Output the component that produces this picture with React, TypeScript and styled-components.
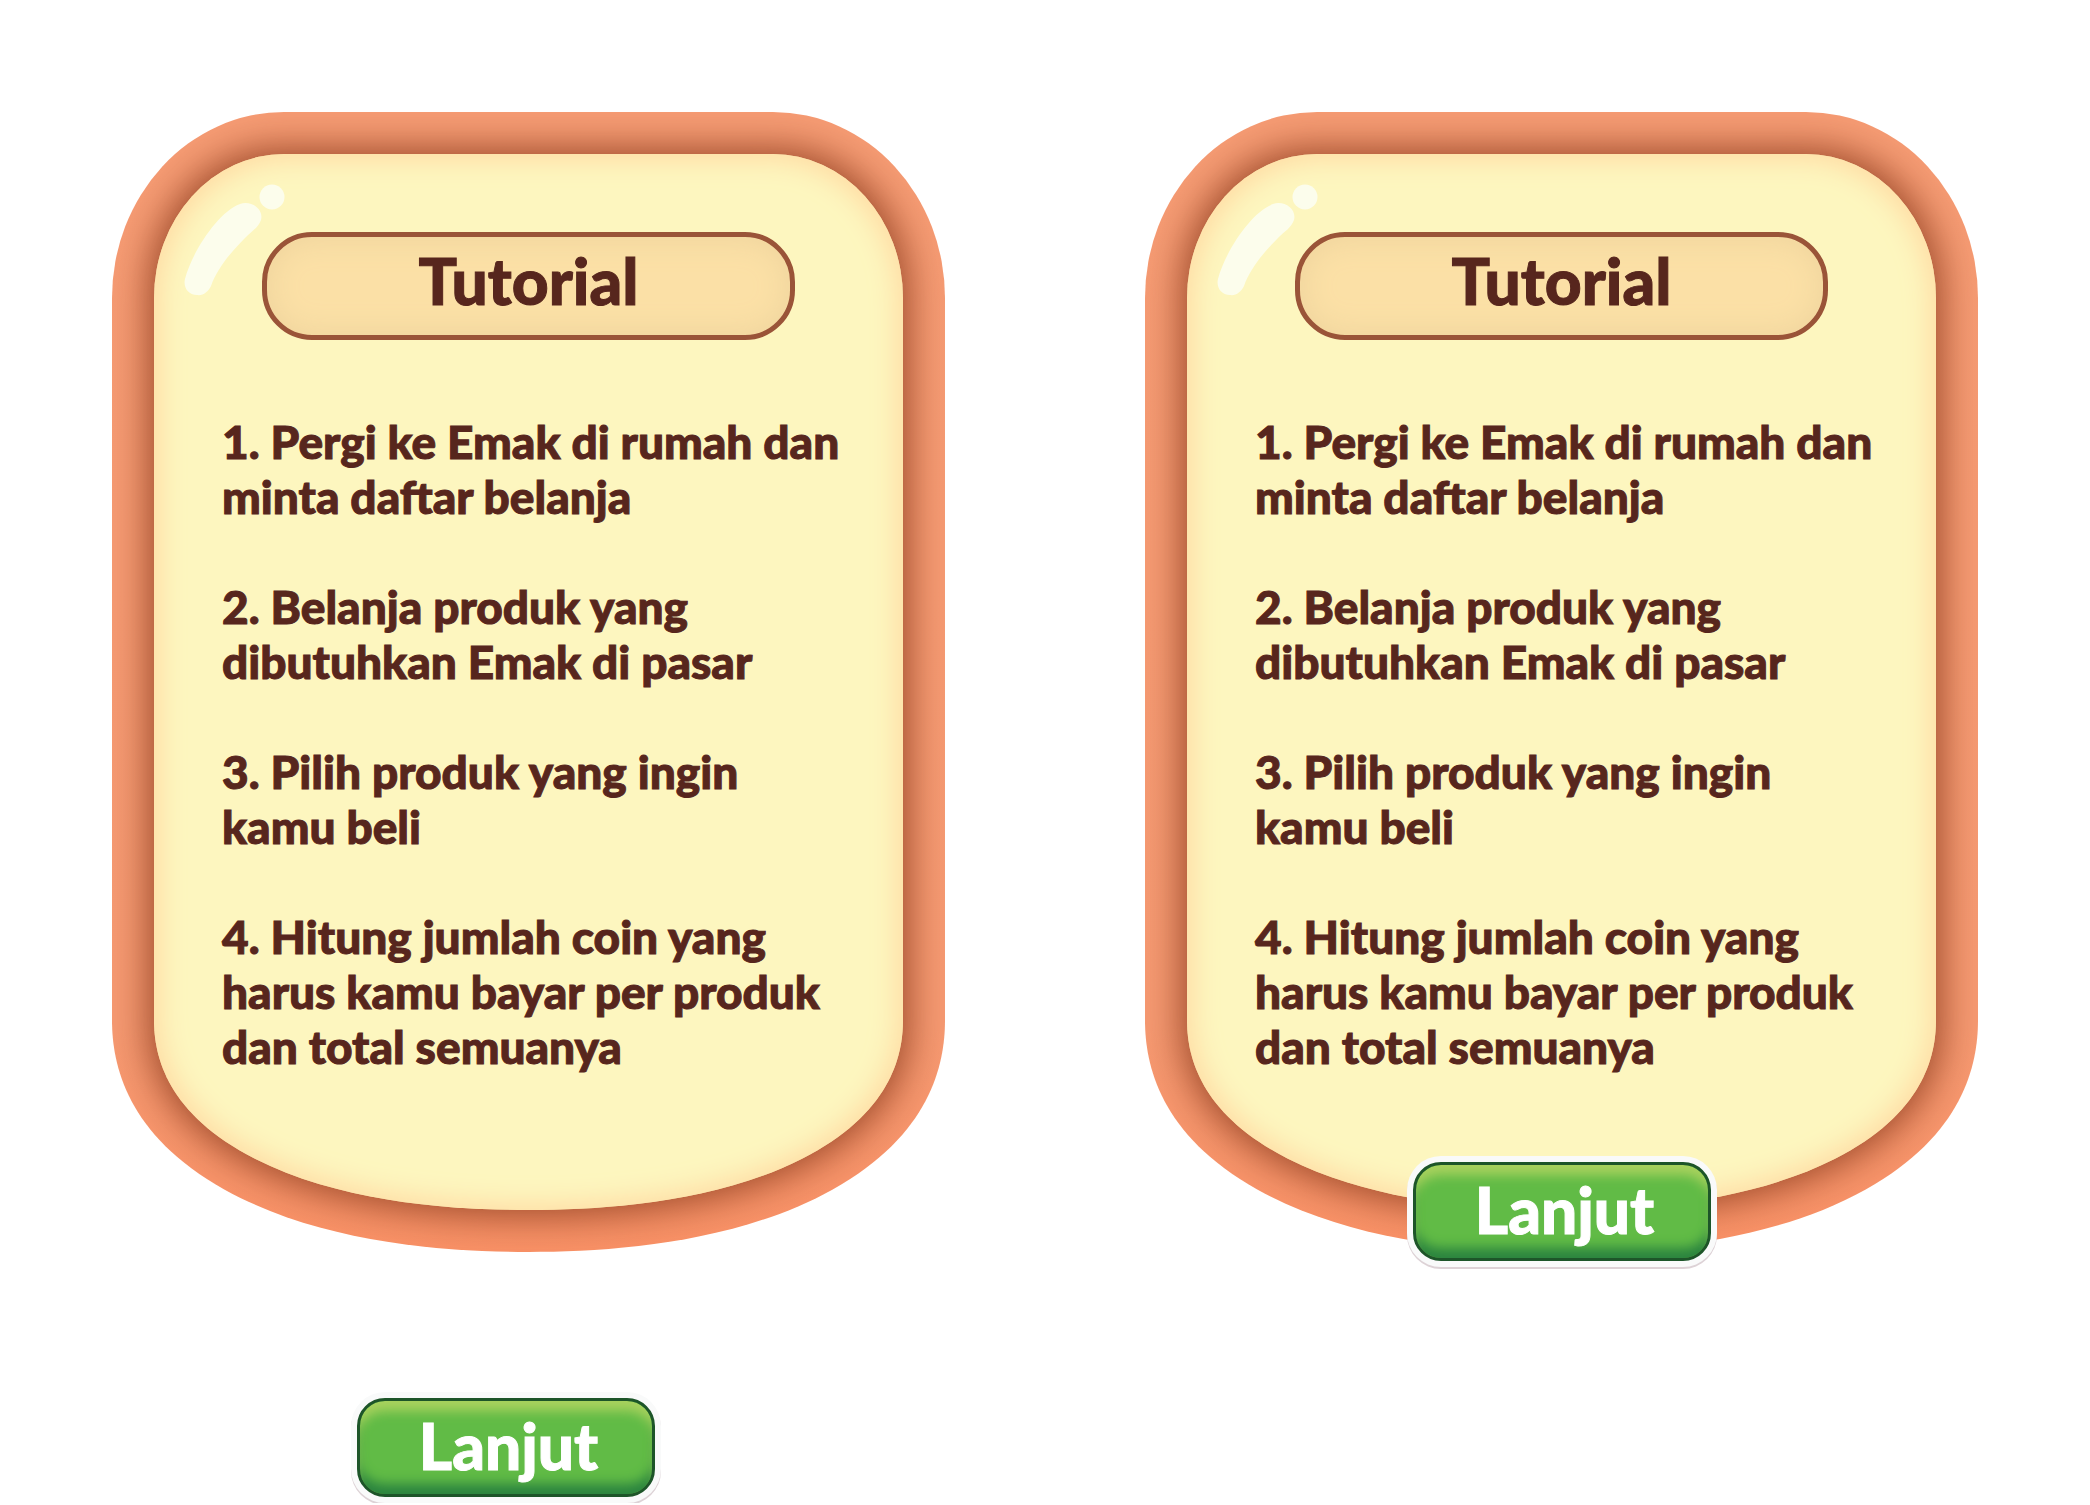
import React from "react";
import styled, { createGlobalStyle } from "styled-components";

const GlobalStyle = createGlobalStyle`
  * { box-sizing: border-box; }
  body { margin: 0; background: #ffffff; }
`;

const Page = styled.main`
  display: grid;
  grid-template-columns: 1fr 1fr;
  gap: 200px;
  padding: 112px 112px 0;
  font-family: Lato, "Open Sans", sans-serif;
  color: #57261d;
`;

const Column = styled.section`
  display: flex;
  flex-direction: column;
`;

const Frame = styled.article`
  padding: 42px;
  overflow: hidden;
  border-radius: 172px 172px 416px 416px / 186px 186px 232px 232px;
  corner-shape: round round superellipse(1.14) superellipse(1.14);
  background: linear-gradient(#f69c74, #f69a72 80%, #f99166);
`;

const Sheet = styled.div`
  position: relative;
  padding: 78px 0 136px;
  border-radius: 130px 130px 374px 374px / 144px 144px 190px 190px;
  corner-shape: round round superellipse(1.14) superellipse(1.14);
  background: #fdf6bf;
  box-shadow:
    0 0 36px 6px rgba(154, 72, 40, 0.95),
    inset 0 0 26px 6px #ffdca4;
`;

const Shine = styled.svg`
  position: absolute;
  top: 28px;
  left: 28px;
  width: 104px;
  height: 116px;
`;

const Title = styled.h1`
  margin: 0 108px 74px;
  padding: 7px 0 17px;
  border: 5px solid #9a5438;
  border-radius: 50px;
  background: #fbe0a6;
  box-shadow: inset 0 0 28px 4px #f0d59e;
  font-size: 64px;
  font-weight: 900;
  line-height: 74px;
  text-align: center;
  -webkit-text-stroke: 1px #57261d;
`;

const Steps = styled.ol`
  display: flex;
  flex-direction: column;
  gap: 55px;
  margin: 0;
  padding: 0 0 0 68px;
  list-style: none;
  font-size: 46px;
  font-weight: 900;
  line-height: 55px;
  white-space: pre-line;
  -webkit-text-stroke: 1px #57261d;
`;

const Action = styled.div<{ $overlap?: boolean }>`
  display: flex;
  justify-content: center;
  position: relative;
  margin-top: ${(p) => (p.$overlap ? "-96px" : "140px")};
  padding-right: ${(p) => (p.$overlap ? "0" : "46px")};
`;

const NextButton = styled.button`
  width: 310px;
  padding: 6px;
  border: 0;
  border-radius: 34px;
  background: #f9fafa;
  box-shadow: 0 2px 0 #ddd2d6;
  font-family: inherit;
  color: #ffffff;
  cursor: pointer;
`;

const ButtonFace = styled.span`
  display: block;
  padding: 8px 0 11px 6px;
  border: 3px solid #1d5529;
  border-radius: 28px;
  background: #61bb46;
  box-shadow:
    inset 0 14px 12px -4px #a9d25e,
    inset 0 -14px 12px -4px #2b843f;
  font-size: 64px;
  font-weight: 900;
  line-height: 74px;
  -webkit-text-stroke: 1px #ffffff;
`;

const steps = [
  "1. Pergi ke Emak di rumah dan\nminta daftar belanja",
  "2. Belanja produk yang\ndibutuhkan Emak di pasar",
  "3. Pilih produk yang ingin\nkamu beli",
  "4. Hitung jumlah coin yang\nharus kamu bayar per produk\ndan total semuanya",
];

function TutorialPanel() {
  return (
    <Frame>
      <Sheet>
        <Shine viewBox="0 0 104 116" aria-hidden="true">
          <g fill="#fcfdec">
            <circle cx="90" cy="15" r="12.5" />
            <path d="M58 22C69 18 82 27 79 38C76 46 70 49 63 56C48 71 35 87 29 104C26 110 21 114 15 113C6 113 1 105 3 97C10 70 36 30 58 22Z" />
          </g>
        </Shine>
        <Title>Tutorial</Title>
        <Steps>
          {steps.map((step) => (
            <li key={step}>{step}</li>
          ))}
        </Steps>
      </Sheet>
    </Frame>
  );
}

function Next({ overlap }: { overlap?: boolean }) {
  return (
    <Action $overlap={overlap}>
      <NextButton type="button">
        <ButtonFace>Lanjut</ButtonFace>
      </NextButton>
    </Action>
  );
}

export default function App() {
  return (
    <>
      <GlobalStyle />
      <Page>
        <Column>
          <TutorialPanel />
          <Next />
        </Column>
        <Column>
          <TutorialPanel />
          <Next overlap />
        </Column>
      </Page>
    </>
  );
}
